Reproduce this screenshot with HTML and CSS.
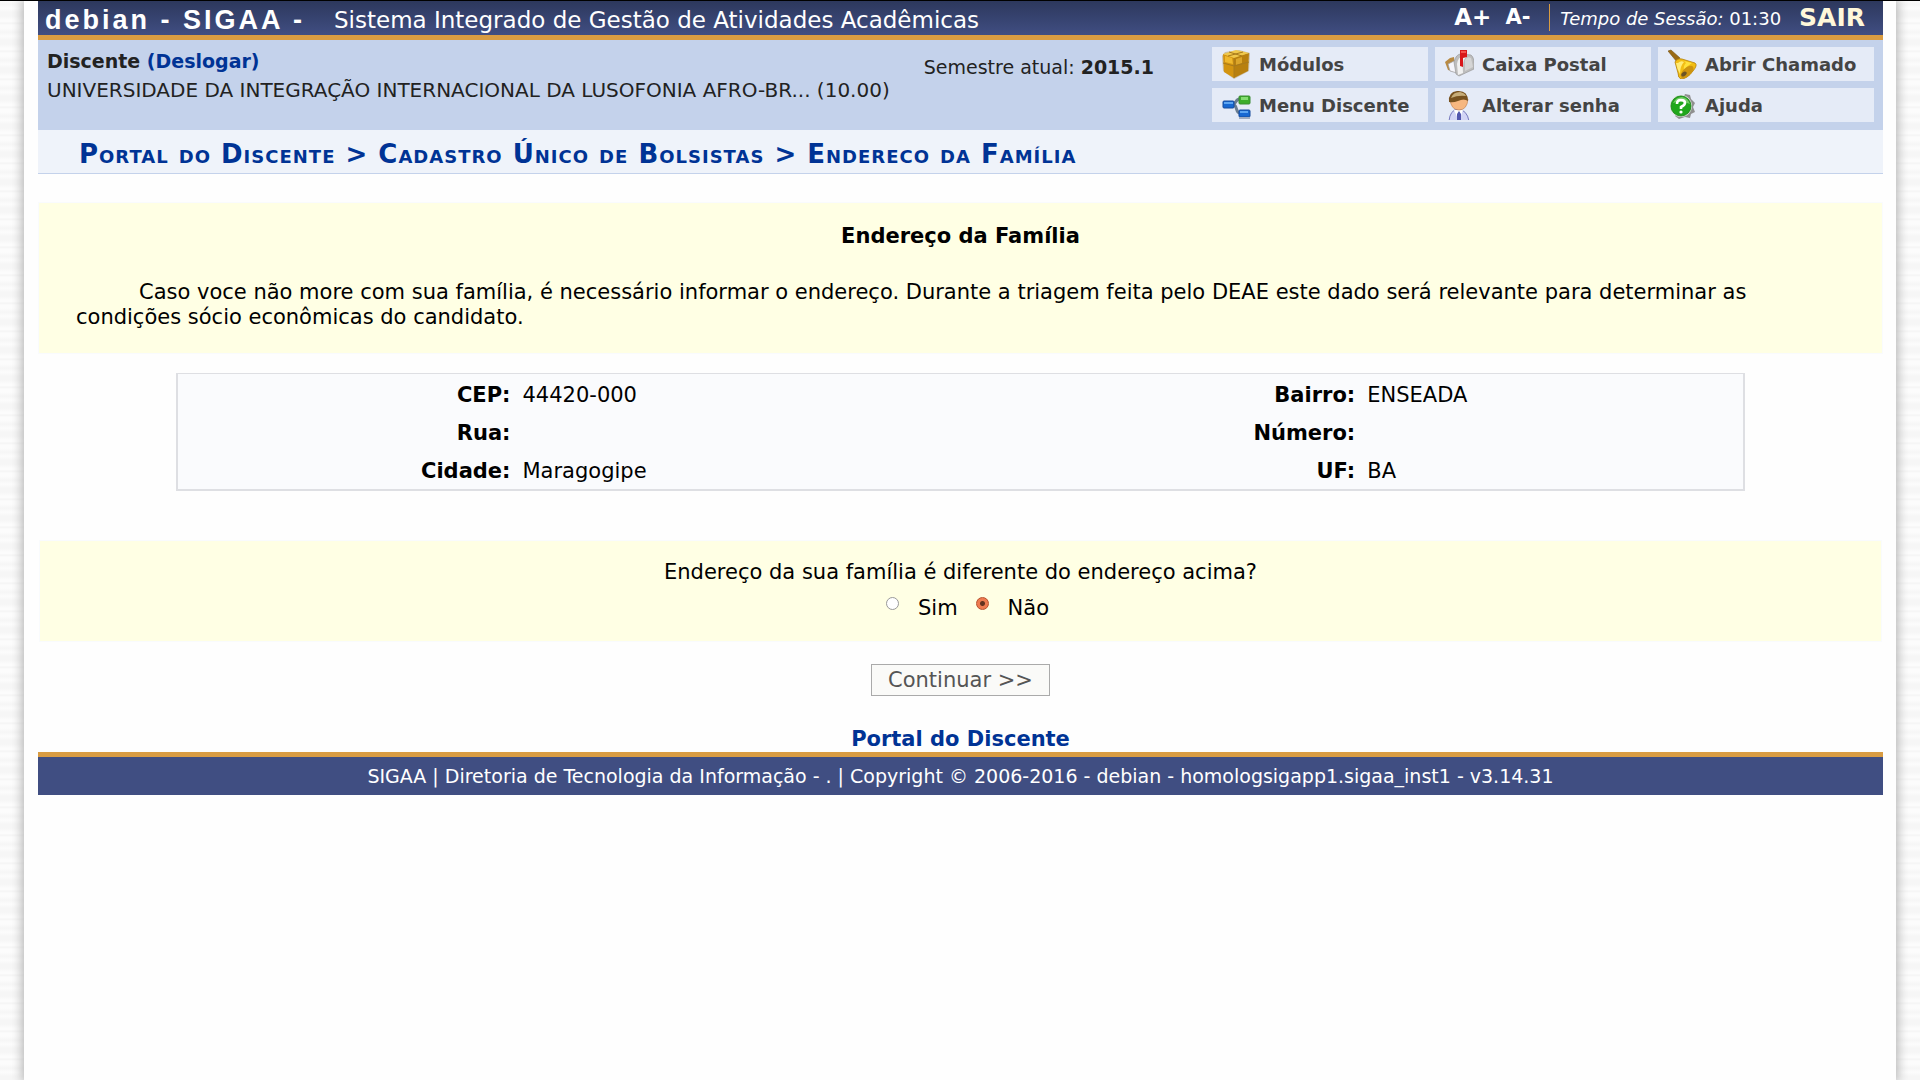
FILE: index.html
```html
<!DOCTYPE html>
<html lang="pt-BR">
<head>
  <meta charset="UTF-8" />
  <meta name="viewport" content="width=device-width, initial-scale=1.0"/>
  <title>SIGAA - Sistema Integrado de Gestão de Atividades Acadêmicas</title>
  <link rel="stylesheet" href="styles.css">
</head>
<body>
  <div class="container">
    <header>
      <div class="info-sistema">
        <h1>debian - SIGAA -</h1>
        <span class="nome-sistema">Sistema Integrado de Gestão de Atividades Acadêmicas</span>
        <div class="acessibilidade">
          <button type="button" class="fonte-maior">A+</button>
          <button type="button" class="fonte-menor">A-</button>
        </div>
        <div class="sessao"><em>Tempo de Sessão:</em> <span>01:30</span></div>
        <a class="sair" href="#sair">SAIR</a>
      </div>
      <div class="painel-usuario">
        <div class="info-usuario">
          <p><strong>Discente <a href="#deslogar">(Deslogar)</a></strong></p>
          <p class="unidade">UNIVERSIDADE DA INTEGRAÇÃO INTERNACIONAL DA LUSOFONIA AFRO-BR... (10.00)</p>
        </div>
        <p class="periodo">Semestre atual: <strong>2015.1</strong></p>
        <nav class="menu-usuario">
          <a href="#modulos">
            <svg viewBox="0 0 29 30" aria-hidden="true">
              <path d="M3 3 L17 1 L28 4 L27 22 L12 30 L1 22 L0 7 Z" fill="#a98a4c" opacity=".45"/>
              <path d="M1 5 L12 8 L12 29 L2 23 Z" fill="#d39410"/>
              <path d="M12 8 L27 4 L26 22 L12 29 Z" fill="#b8800f"/>
              <path d="M1 5 L14 1 L27 4 L12 9 Z" fill="#f0c84b"/>
              <path d="M3 7 L10 9 L11 15 L3 13 Z" fill="#efb82d"/>
              <path d="M14 10 L20 8 L20 14 L14 16 Z" fill="#dba52a"/>
              <path d="M1 14 L12 17 L27 13 M12 9 V29 M7 3 L20 7 M21 3 L6 7" fill="none" stroke="#a87a1c" stroke-width="1"/>
            </svg>
            Módulos
          </a>
          <a href="#caixa-postal">
            <svg viewBox="0 0 29 30" aria-hidden="true">
              <path d="M0 13 L5 9 L9 8 L10 23 L3 21 Z" fill="#b88a43"/>
              <path d="M3 15 L11 11 L12 24 L5 22 Z" fill="#f5f5fb" stroke="#999" stroke-width=".7"/>
              <path d="M9 13 Q11 5 16 5 L26 6 Q30 9 29 20 L14 27 L11 25 Z" fill="#bdbdbd" stroke="#999" stroke-width=".7"/>
              <path d="M12 15 Q13 8 18 7 L21 8 Q17 12 18 24 L13 26 Z" fill="#f1f1f1"/>
              <path d="M20 11 Q22 7 26 9 L28 18 L20 22 Z" fill="#d5d5d5"/>
              <path d="M15 1 L22 1 L22 8 L18 9 L18 18 L15 17 Z" fill="#d9171a"/>
              <path d="M16 2 H21 V4 H16 Z" fill="#f4534d"/>
            </svg>
            Caixa Postal
          </a>
          <a href="#abrir-chamado">
            <svg viewBox="0 0 29 30" aria-hidden="true">
              <path d="M0 2 L3 1 L12 9 L9 13 Z" fill="#9a6a14" stroke="#765013" stroke-width=".6"/>
              <path d="M7 13 Q9 9 14 10 L27 14 Q30 16 25 22 Q19 30 13 30 Q10 29 10 24 Z" fill="#f2bd13" stroke="#b3800c" stroke-width=".8"/>
              <path d="M10 14 Q13 11 16 13 Q12 17 12 25 Q9 20 8 14 Z" fill="#ffeb77"/>
              <path d="M16 12 L24 14 Q19 17 16 21 Q15 17 18 14 Z" fill="#ffe13a"/>
              <ellipse cx="19" cy="23" rx="8" ry="4" transform="rotate(-43 19 23)" fill="#cd9410"/>
              <ellipse cx="16" cy="25" rx="3" ry="2" transform="rotate(-40 16 25)" fill="#6b5526"/>
            </svg>
            Abrir Chamado
          </a>
          <a href="#menu-discente">
            <svg viewBox="0 0 29 30" aria-hidden="true">
              <path d="M10 14 C15 14 13 9 18 9 M10 14 C16 14 13 23 18 23" fill="none" stroke="#6a7d91" stroke-width="3"/>
              <rect x="1" y="11" width="11" height="7" rx="1" fill="#1768d2" stroke="#174b9b"/>
              <path d="M2 12 H11 V14 H2 Z" fill="#5ca5f2"/>
              <rect x="17" y="6" width="11" height="8" rx="1" fill="#3cad2b" stroke="#3b8c33"/>
              <path d="M19 7 H26 V10 H19 Z" fill="#83dc70"/>
              <rect x="17" y="20" width="11" height="7" rx="1" fill="#1768d2" stroke="#174b9b"/>
              <path d="M18 21 H26 V23 H18 Z" fill="#5ca5f2"/>
              <path d="M17 28 H28" stroke="#9eabc0" stroke-width="2"/>
            </svg>
            Menu Discente
          </a>
          <a href="#alterar-senha">
            <svg viewBox="0 0 29 30" aria-hidden="true">
              <path d="M4 31 Q5 20 13 19 Q22 20 24 31 Z" fill="#d3d5f5" stroke="#7779bd"/>
              <path d="M9 20 L14 31 L18 20 Z" fill="#fff"/>
              <path d="M14 21 L12 24 V31 H16 V24 Z" fill="#5357ad"/>
              <path d="M5 9 Q6 20 14 20 Q22 20 23 9 Z" fill="#f6b780" stroke="#c48450" stroke-width=".7"/>
              <path d="M4 12 Q3 2 12 1 Q23 0 23 11 Q19 8 13 11 Q8 13 4 12 Z" fill="#78521f"/>
              <path d="M6 8 Q8 2 15 2 Q20 3 21 6 Q13 5 6 8 Z" fill="#c7ad79"/>
            </svg>
            Alterar senha
          </a>
          <a href="#ajuda">
            <svg viewBox="0 0 29 30" aria-hidden="true">
              <path d="M17 4 L22 5 L23 9 L27 13 L25 17 L27 22 L23 24 L22 28 L17 27 L11 29 L7 26 Z" fill="#8f8f8f"/>
              <circle cx="13" cy="16" r="11" fill="#d7e0d6"/>
              <circle cx="13" cy="16" r="10" fill="#20a71c" stroke="#178414" stroke-width=".8"/>
              <path d="M5 13 Q8 7 14 7 Q20 8 22 14 Q13 10 5 13 Z" fill="#72cb65"/>
              <path d="M9 14 Q9 10 13 10 Q17 10 17 13 Q17 15 13 17 V19" fill="none" stroke="#fff" stroke-width="2.6"/>
              <circle cx="13" cy="22" r="1.6" fill="#fff"/>
            </svg>
            Ajuda
          </a>
        </nav>
      </div>
    </header>

    <main>
      <h2><a href="#portal">Portal do Discente</a> &gt; Cadastro Único de Bolsistas &gt; Endereco da Família</h2>

      <section class="descricao">
        <h3>Endereço da Família</h3>
        <p>Caso voce não more com sua família, é necessário informar o endereço. Durante a triagem feita pelo DEAE este dado será relevante para determinar as condições sócio econômicas do candidato.</p>
      </section>

      <table class="endereco">
        <tr>
          <th scope="row">CEP:</th><td>44420-000</td>
          <th scope="row">Bairro:</th><td>ENSEADA</td>
        </tr>
        <tr>
          <th scope="row">Rua:</th><td></td>
          <th scope="row">Número:</th><td></td>
        </tr>
        <tr>
          <th scope="row">Cidade:</th><td>Maragogipe</td>
          <th scope="row">UF:</th><td>BA</td>
        </tr>
      </table>

      <form>
        <fieldset class="pergunta">
          <legend>Endereço da sua família é diferente do endereço acima?</legend>
          <div class="opcoes">
            <input type="radio" name="diferente" id="sim"><label for="sim">Sim</label>
            <input type="radio" name="diferente" id="nao" checked><label for="nao">Não</label>
          </div>
        </fieldset>
        <button type="button" class="continuar">Continuar &gt;&gt;</button>
      </form>
      <a class="voltar" href="#portal">Portal do Discente</a>
    </main>

    <footer>SIGAA | Diretoria de Tecnologia da Informação - . | Copyright © 2006-2016 - debian - homologsigapp1.sigaa_inst1 - v3.14.31</footer>
  </div>
</body>
</html>
```
FILE: styles.css
```css
* {
  box-sizing: border-box;
}
body {
  margin: 0;
  padding: 0 24px;
  min-height: 100vh;
  display: flex;
  border-top: 1px solid #000;
  font-family: Verdana, "DejaVu Sans", sans-serif;
  font-size: 21px;
  line-height: 25px;
  color: #000;
  background: repeating-linear-gradient(#fcfcfc 0, #f6f6f6 4px, #fcfcfc 8px, #f6f6f6 12px, #f6f6f6 16px, #fcfcfc 20px, #fcfcfc 22px, #f4f4f4 23px, #fcfcfc 25px, #fcfcfc 28px);
}
h1, h2, h3, p {
  margin: 0;
}
a {
  color: #003395;
  text-decoration: none;
}
.container {
  flex: 1;
  min-width: 0;
  padding: 0 13px 0 14px;
  background-color: #fefefe;
  box-shadow: 0 0 10px 2px #b4b4b4;
  clip-path: inset(0 -12px);
}

/* header */
.info-sistema {
  display: flex;
  align-items: center;
  height: 39px;
  padding: 4px 18px 0 7px;
  color: #fff;
  background: linear-gradient(#2d385d, #404e82);
  border-bottom: 5px solid #d99c42;
}
.info-sistema h1 {
  font-family: "Liberation Sans", Arial, sans-serif;
  font-size: 27px;
  letter-spacing: 3px;
  white-space: nowrap;
}
.nome-sistema {
  margin-left: 29px;
  font-size: 23px;
  white-space: nowrap;
}
.acessibilidade {
  display: flex;
  align-items: center;
  gap: 14px;
  height: 27px;
  margin: 0 10px 6px auto;
  padding-right: 19px;
  border-right: 1px solid #d99c42;
}
.acessibilidade button {
  padding: 0;
  border: 0;
  background: none;
  color: #fff;
  font-family: inherit;
  font-weight: bold;
  cursor: pointer;
}
.fonte-maior {
  font-size: 23px;
}
.fonte-menor {
  font-size: 21px;
}
.sessao {
  margin-bottom: 4px;
  font-size: 18px;
  white-space: nowrap;
}
.sair {
  margin: 0 0 6px 18px;
  font-size: 25px;
  font-weight: bold;
  color: #fff8da;
}
.painel-usuario {
  display: flex;
  align-items: flex-start;
  padding: 7px 9px 8px;
  font-size: 19px;
  color: #222;
  background-color: #c4d2eb;
}
.info-usuario {
  flex: 1;
  line-height: 29px;
  white-space: nowrap;
}
.unidade {
  font-size: 20px;
}
.periodo {
  margin: 8px 58px 0 0;
  white-space: nowrap;
}
.menu-usuario {
  display: grid;
  grid-template-columns: repeat(3, 216px);
  gap: 7px;
}
.menu-usuario a {
  display: flex;
  align-items: center;
  gap: 8px;
  height: 34px;
  padding: 0 10px;
  overflow: hidden;
  font-size: 18px;
  font-weight: bold;
  white-space: nowrap;
  color: #444;
  background-color: #e5ebf7;
}
.menu-usuario svg {
  width: 29px;
  height: 30px;
  flex: none;
}

/* content */
h2 {
  margin-bottom: 28px;
  padding: 12px 41px 6px;
  border-bottom: 1px solid #c4d2eb;
  background-color: #eff3fa;
  font-size: 26px;
  font-variant: small-caps;
  letter-spacing: 1px;
  color: #003395;
}
.descricao {
  padding: 21px 37px 23px;
  border: 1px solid #f9fbfd;
  background-color: #ffffe4;
}
.descricao h3 {
  margin-bottom: 31px;
  font-size: 21px;
  text-align: center;
}
.descricao p {
  text-indent: 63px;
}
.endereco {
  width: 85%;
  margin: 19px auto 49px;
  padding-top: 1px;
  border: 2px solid #dedfe3;
  border-top-width: 1px;
  border-spacing: 0;
  table-layout: fixed;
  background-color: #fafbfd;
}
.endereco th {
  width: 27%;
  padding: 8px 12px 5px 0;
  text-align: right;
}
.endereco th:first-child {
  width: 22%;
}
.endereco td {
  padding: 8px 0 5px;
}
.endereco td:last-child {
  width: 24%;
}
form {
  text-align: center;
}
.pergunta {
  margin: 0 1px 22px;
  padding: 19px 0 20px;
  border: 1px solid #f9fbfd;
  background-color: #ffffe4;
}
.pergunta legend {
  float: left;
  width: 100%;
  padding: 0;
}
.opcoes {
  display: flex;
  justify-content: center;
  clear: both;
  padding: 11px 0 0 14px;
}
.opcoes input {
  appearance: none;
  width: 13px;
  height: 13px;
  margin: 1px 19px 0 0;
  border: 1px solid #999;
  border-radius: 50%;
  background-color: #fff;
}
.opcoes input:checked {
  border-color: #b84f2c;
  background: radial-gradient(circle, #63321f 2px, #ee7b50 3px);
}
.opcoes label + input {
  margin-left: 18px;
}
.continuar {
  padding: 2px 16px;
  border: 1px solid #aaa;
  background-color: #fafaf8;
  font-family: inherit;
  font-size: 21px;
  line-height: 26px;
  color: #555;
}
.voltar {
  display: block;
  margin-top: 31px;
  text-align: center;
  font-weight: bold;
}
footer {
  padding: 7px 0 6px;
  border-top: 5px solid #d99c42;
  background-color: #404e82;
  font-size: 19px;
  text-align: center;
  color: #fff;
}
```
